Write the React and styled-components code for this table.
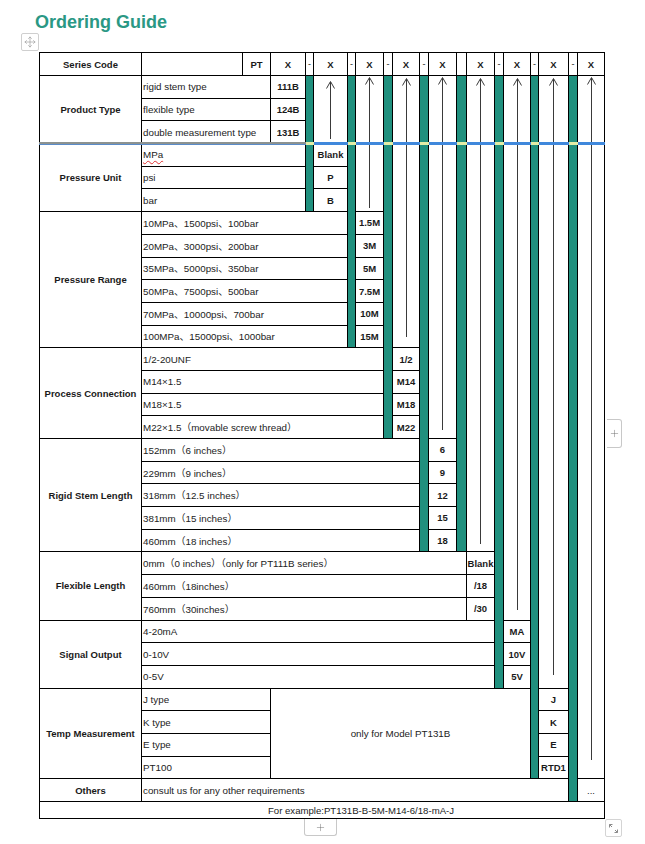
import React from "react";
import styled, { createGlobalStyle } from "styled-components";
import { Move, Plus } from "lucide-react";

// column widths (each includes its right border)
const COLS = [102, 101, 28, 35, 8, 34, 8, 28, 9, 27, 9, 28, 10, 28, 9, 27, 8, 30, 9, 27];
const DASH_COLS = [4, 6, 8, 10, 12, 14, 16, 18];

const col = (a, b = a) => `${a + 1} / ${b + 2}`;
const row = (a, b = a) => `${a} / ${b + 1}`;

const header = ["Series Code", "", "PT", "X", "-", "X", "-", "X", "-", "X", "-", "X", "", "X", "-", "X", "-", "X", "-", "X"];

const groups = [
  {
    label: "Product Type",
    start: 2,
    descTo: 2,
    code: 3,
    items: [
      ["rigid stem type", "111B"],
      ["flexible type", "124B"],
      ["double measurement type", "131B"],
    ],
  },
  {
    label: "Pressure Unit",
    start: 5,
    descTo: 3,
    code: 5,
    items: [
      ["MPa", "Blank", true],
      ["psi", "P"],
      ["bar", "B"],
    ],
  },
  {
    label: "Pressure Range",
    start: 8,
    descTo: 5,
    code: 7,
    items: [
      ["10MPa、1500psi、100bar", "1.5M"],
      ["20MPa、3000psi、200bar", "3M"],
      ["35MPa、5000psi、350bar", "5M"],
      ["50MPa、7500psi、500bar", "7.5M"],
      ["70MPa、10000psi、700bar", "10M"],
      ["100MPa、15000psi、1000bar", "15M"],
    ],
  },
  {
    label: "Process Connection",
    start: 14,
    descTo: 7,
    code: 9,
    items: [
      ["1/2-20UNF", "1/2"],
      ["M14×1.5", "M14"],
      ["M18×1.5", "M18"],
      ["M22×1.5（movable screw thread）", "M22"],
    ],
  },
  {
    label: "Rigid Stem Length",
    start: 18,
    descTo: 9,
    code: 11,
    items: [
      ["152mm（6 inches）", "6"],
      ["229mm（9 inches）", "9"],
      ["318mm（12.5 inches）", "12"],
      ["381mm（15 inches）", "15"],
      ["460mm（18 inches）", "18"],
    ],
  },
  {
    label: "Flexible Length",
    start: 23,
    descTo: 12,
    code: 13,
    items: [
      ["0mm（0 inches）（only for PT111B series）", "Blank"],
      ["460mm（18inches）", "/18"],
      ["760mm（30inches）", "/30"],
    ],
  },
  {
    label: "Signal Output",
    start: 26,
    descTo: 13,
    code: 15,
    items: [
      ["4-20mA", "MA"],
      ["0-10V", "10V"],
      ["0-5V", "5V"],
    ],
  },
  {
    label: "Temp Measurement",
    start: 29,
    descTo: 2,
    code: 17,
    items: [
      ["J type", "J"],
      ["K type", "K"],
      ["E type", "E"],
      ["PT100", "RTD1"],
    ],
  },
];

const bars = [
  { c: 4, to: 7 },
  { c: 6, to: 13 },
  { c: 8, to: 17 },
  { c: 10, to: 22 },
  { c: 12, to: 22 },
  { c: 14, to: 28 },
  { c: 16, to: 32 },
  { c: 18, to: 33 },
];

const arrows = [
  { c: 5, to: 4, top: 5, gap: 4 },
  { c: 7, to: 7, top: 1, gap: 3 },
  { c: 9, to: 13, top: 2, gap: 10 },
  { c: 11, to: 17, top: 1, gap: 8 },
  { c: 13, to: 22, top: 2, gap: 7 },
  { c: 15, to: 25, top: 2, gap: 10 },
  { c: 17, to: 28, top: 2, gap: 13 },
  { c: 19, to: 32, top: 1, gap: 18 },
];

function Arrow({ top, gap }) {
  return (
    <ArrowBox $top={top} $gap={gap}>
      <svg width="9" height="8" viewBox="0 0 9 8">
        <polyline points="0.5,7.5 4.5,0.5 8.5,7.5" fill="none" stroke="#3a3a3a" strokeWidth="1" />
      </svg>
      <Stem />
    </ArrowBox>
  );
}

function ResizeIcon() {
  return (
    <svg width="11" height="11" viewBox="0 0 11 11" fill="none" stroke="#8a8a8a" strokeWidth="1">
      <polyline points="1.5,4.5 1.5,1.5 4.5,1.5" />
      <line x1="1.5" y1="1.5" x2="4" y2="4" />
      <polyline points="9.5,6.5 9.5,9.5 6.5,9.5" />
      <line x1="9.5" y1="9.5" x2="7" y2="7" />
    </svg>
  );
}

export default function App() {
  return (
    <Page>
      <GlobalStyle />
      <Title>Ordering Guide</Title>
      <Handle>
        <Move size={12} strokeWidth={1.3} color="#9a9a9a" />
      </Handle>

      <Frame>
        <Grid>
          {header.map((h, i) => (
            <HeadCell key={i} $col={col(i)} $row={row(1)} $thin={h === "-"}>
              {h}
            </HeadCell>
          ))}

          {groups.map((g) => (
            <React.Fragment key={g.label}>
              <Label $col={col(0)} $row={row(g.start, g.start + g.items.length - 1)}>
                {g.label}
              </Label>
              {g.items.map(([d, c, squiggle], k) => (
                <React.Fragment key={d}>
                  <Desc $col={col(1, g.descTo)} $row={row(g.start + k)}>
                    {squiggle ? <Squiggle>{d}</Squiggle> : d}
                  </Desc>
                  <Code $col={col(g.code)} $row={row(g.start + k)}>
                    {c}
                  </Code>
                </React.Fragment>
              ))}
            </React.Fragment>
          ))}

          <Note $col={col(3, 15)} $row={row(29, 32)}>
            only for Model PT131B
          </Note>

          <Label $col={col(0)} $row={row(33)}>
            Others
          </Label>
          <Desc $col={col(1, 17)} $row={row(33)}>
            consult us for any other requirements
          </Desc>
          <Code $col={col(19)} $row={row(33)} $light>
            ...
          </Code>

          {bars.map((b) => (
            <Bar key={b.c} $col={col(b.c)} $row={row(2, b.to)} />
          ))}

          {arrows.map((a) => (
            <ArrowCell key={a.c} $col={col(a.c)} $row={row(2, a.to)}>
              <Arrow top={a.top} gap={a.gap} />
            </ArrowCell>
          ))}

          <Example $col={col(0, 19)} $row={row(34)}>
            For example:PT131B-B-5M-M14-6/18-mA-J
          </Example>
        </Grid>

        <DropLine>
          <Seg $w={1} $kind="left" />
          {COLS.map((w, i) => (
            <Seg key={i} $w={w} $kind={i < 4 ? "left" : DASH_COLS.includes(i) ? "bar" : "blue"} />
          ))}
        </DropLine>

        <SideTab>
          <Plus size={11} strokeWidth={1} color="#666" />
        </SideTab>

        <Footer>
          <BottomTab>
            <Plus size={11} strokeWidth={1} color="#666" />
          </BottomTab>
          <Resize>
            <ResizeIcon />
          </Resize>
        </Footer>
      </Frame>
    </Page>
  );
}

const GlobalStyle = createGlobalStyle`
  body {
    margin: 0;
    background: #fff;
    font-family: "Liberation Sans", "Noto Sans CJK SC", Arial, sans-serif;
    color: #1a1a1a;
  }
`;

const Page = styled.div`
  padding: 11px 0 8px;
  width: 645px;
`;

const Title = styled.h1`
  margin: 0;
  padding-left: 35px;
  font-size: 18px;
  line-height: 22px;
  font-weight: 700;
  color: #2a9884;
`;

const Handle = styled.div`
  box-sizing: border-box;
  width: 18px;
  height: 18px;
  margin: 0 0 1px 21px;
  border: 1px solid #cfcfcf;
  border-radius: 2px;
  display: flex;
  align-items: center;
  justify-content: center;
`;

const Frame = styled.div`
  position: relative;
  margin-left: 39px;
  width: 566px;
`;

const Grid = styled.div`
  display: grid;
  grid-template-columns: ${COLS.map((w) => `${w}px`).join(" ")};
  grid-template-rows: 23px repeat(32, 22.7px) 17px;
  border-top: 1px solid #000;
  border-left: 1px solid #000;
`;

const Cell = styled.div`
  grid-column: ${(p) => p.$col};
  grid-row: ${(p) => p.$row};
  box-sizing: border-box;
  border-right: 1px solid #000;
  border-bottom: 1px solid #000;
  display: flex;
  align-items: center;
  justify-content: center;
  overflow: hidden;
  white-space: nowrap;
  min-width: 0;
`;

const HeadCell = styled(Cell)`
  font-size: ${(p) => (p.$thin ? "9px" : "9.5px")};
  font-weight: ${(p) => (p.$thin ? 400 : 700)};
`;

const Label = styled(Cell)`
  font-size: 9.5px;
  font-weight: 700;
`;

const Desc = styled(Cell)`
  justify-content: flex-start;
  padding-left: 1px;
  font-size: 9.8px;
  color: #222;
`;

const Squiggle = styled.span`
  text-decoration: underline wavy #e03030;
  text-decoration-thickness: 1px;
  text-underline-offset: 2px;
  text-decoration-skip-ink: none;
`;

const Code = styled(Cell)`
  font-size: 9.5px;
  font-weight: ${(p) => (p.$light ? 400 : 700)};
`;

const Note = styled(Cell)`
  font-size: 9.8px;
  color: #222;
`;

const Example = styled(Cell)`
  font-size: 9.6px;
  color: #222;
  padding-left: 78px;
`;

const Bar = styled(Cell)`
  background: #20907e;
`;

const ArrowCell = styled(Cell)`
  align-items: stretch;
`;

const ArrowBox = styled.div`
  display: flex;
  flex-direction: column;
  align-items: center;
  padding-top: ${(p) => p.$top}px;
  padding-bottom: ${(p) => p.$gap}px;
  width: 100%;

  svg {
    flex-shrink: 0;
    display: block;
  }
`;

const Stem = styled.div`
  flex: 1;
  width: 1px;
  margin-top: -7.5px;
  background: #3a3a3a;
`;

const DropLine = styled.div`
  position: absolute;
  left: 0;
  top: 90px;
  height: 3px;
  display: flex;
`;

const Seg = styled.div`
  width: ${(p) => p.$w}px;
  height: 100%;
  background: ${(p) =>
    p.$kind === "left"
      ? "linear-gradient(#8c9290 0 55%, #5a8cca 55% 100%)"
      : p.$kind === "bar"
      ? "#e3eda6"
      : "#3f88dc"};
`;

const SideTab = styled.div`
  position: absolute;
  left: 568px;
  top: 367px;
  width: 15px;
  height: 29px;
  box-sizing: border-box;
  border: 1px solid #c8c8c8;
  border-left: none;
  border-radius: 0 3px 3px 0;
  background: #fff;
  display: flex;
  align-items: center;
  justify-content: center;
`;

const Footer = styled.div`
  display: flex;
  align-items: flex-start;
  height: 19px;
  width: 583px;
`;

const BottomTab = styled.div`
  margin-left: 265px;
  width: 33px;
  height: 17px;
  box-sizing: border-box;
  border: 1px solid #c8c8c8;
  border-top: none;
  border-radius: 0 0 3px 3px;
  background: #fff;
  display: flex;
  align-items: center;
  justify-content: center;
`;

const Resize = styled.div`
  margin-left: auto;
  width: 17px;
  height: 18px;
  box-sizing: border-box;
  border: 1px solid #d4d4d4;
  border-radius: 2px;
  display: flex;
  align-items: center;
  justify-content: center;
`;
